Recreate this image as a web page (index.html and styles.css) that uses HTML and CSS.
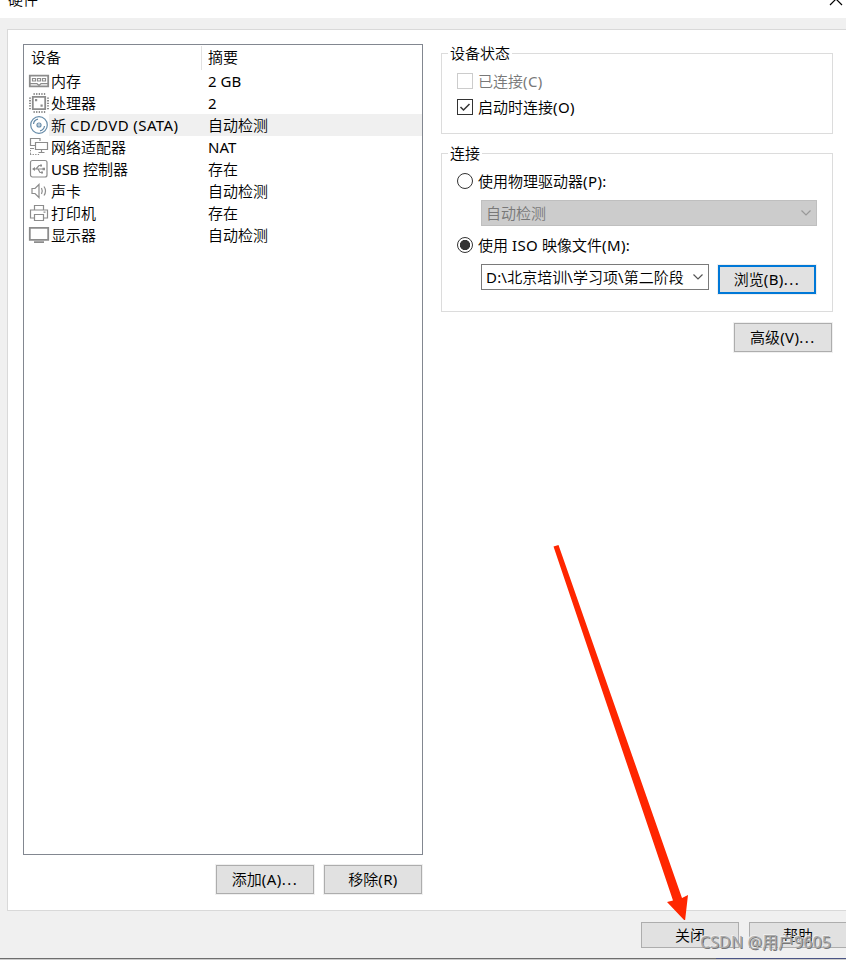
FILE: index.html
```
<!DOCTYPE html>
<html lang="zh-CN">
<head>
<meta charset="utf-8">
<title>硬件</title>
<link rel="stylesheet" href="styles.css">
</head>
<body>
<div class="window">
  <header class="titlebar">
    <span class="title">硬件</span>
    <svg class="close" width="14" height="14" viewBox="0 0 14 14"><path d="M1 1l12 12M13 1L1 13"/></svg>
  </header>
  <main class="panel">
    <section class="left">
      <div class="list">
        <div class="head"><span class="c1">设备</span><span class="c2">摘要</span></div>
        <div class="row">
          <svg class="icon" viewBox="0 0 22 22"><path class="mid" d="M1.800 5.700h18.400v10.600H1.800z"/><path d="M4.500 8.500h3v2.500h-3zM9.500 8.500h3v2.500h-3zM14.500 8.500h3v2.500h-3zM2 13.700h7l2 1.800 2-1.800h7"/></svg>
          <span class="name">内存</span><span class="value"><i>2 GB</i></span>
        </div>
        <div class="row">
          <svg class="icon" viewBox="0 0 22 22"><path class="mid" d="M4.800 4.800h12.400v12.400H4.800z"/><path class="pins" d="M5.500 2h12M5.500 20h12M2 5.500v12M20 5.500v12"/><path class="fill" d="M7 7h2.200v2.200H7zM12.500 12.500h2.200v2.200h-2.200z"/></svg>
          <span class="name">处理器</span><span class="value"><i>2</i></span>
        </div>
        <div class="row selected">
          <svg class="icon disc" viewBox="0 0 22 22"><circle cx="11" cy="11" r="8.300"/><circle cx="11" cy="11" r="2"/><path d="M5.500 10q.5-4 4.500-4.800M16.500 12q-.5 4-4.500 4.800"/><circle class="dot" cx="11" cy="11" r=".8"/></svg>
          <span class="name">新 <i class="lat">CD/DVD (SATA)</i></span><span class="value">自动检测</span>
        </div>
        <div class="row">
          <svg class="icon" viewBox="0 0 22 22"><path d="M7 9.500H2.500v-7H12V5M7.500 6.500h12v7h-12zM13.500 13.500v3M10.500 16.500h6M2 12.500h4"/><path class="pins thin" d="M2.500 14v5M2 18.500h10"/></svg>
          <span class="name">网络适配器</span><span class="value"><i>NAT</i></span>
        </div>
        <div class="row">
          <svg class="icon" viewBox="0 0 22 22"><rect x="2.500" y="2.500" width="16.500" height="16.500" rx="2"/><path d="M5 11h11M8 11l3-3.500h2M10 11l2 3.500h2"/><path class="fill" d="M4 11l3-2v4zM14.500 9.700h2.500v2.500h-2.500zM12 6.500h2v2h-2zM13 13.500h2v2h-2z"/></svg>
          <span class="name"><i class="usb">USB</i> 控制器</span><span class="value">存在</span>
        </div>
        <div class="row">
          <svg class="icon" viewBox="0 0 22 22"><path d="M4 8.500h3l4-4v13l-4-4H4zM13.500 8q1.500 3 0 6M16 6.500q3 4.500 0 9"/></svg>
          <span class="name">声卡</span><span class="value">自动检测</span>
        </div>
        <div class="row">
          <svg class="icon" viewBox="0 0 22 22"><path d="M6.500 8V3.500h9V8M6 16H2.500V8h17v8H16M6.500 12.500h9v6h-9zM15.500 10.200h2"/></svg>
          <span class="name">打印机</span><span class="value">存在</span>
        </div>
        <div class="row">
          <svg class="icon" viewBox="0 0 22 22"><path class="mid" d="M1.800 3.800h18.400v12H1.800zM6 18.200h10"/></svg>
          <span class="name">显示器</span><span class="value">自动检测</span>
        </div>
      </div>
      <div class="actions"><button class="btn">添加<i class="key">(A)</i><i class="dots">...</i></button><button class="btn">移除<i class="key">(R)</i></button></div>
    </section>
    <section class="right">
      <div class="group status">
        <span class="legend">设备状态</span>
        <label class="option disabled"><span class="box"></span><span class="text">已连接<i class="key">(C)</i></span></label>
        <label class="option"><span class="box"><svg width="14" height="14" viewBox="0 0 14 14"><path d="M2.500 7l3 3 6-6"/></svg></span><span class="text">启动时连接<i class="key">(O)</i></span></label>
      </div>
      <div class="group connection">
        <span class="legend">连接</span>
        <label class="option"><span class="radio"></span><span class="text">使用物理驱动器<i class="key">(P):</i></span></label>
        <div class="combo off"><span>自动检测</span><svg width="10" height="6" viewBox="0 0 10 6"><path d="M.5.5L5 5 9.500.5"/></svg></div>
        <label class="option iso"><span class="radio on"></span><span class="text">使用 <i class="key">ISO</i> 映像文件<i class="key">(M):</i></span></label>
        <div class="file">
          <div class="combo"><span><i class="path">D:\</i>北京培训<i class="path">\</i>学习项<i class="path">\</i>第二阶段</span><svg width="10" height="6" viewBox="0 0 10 6"><path d="M.5.5L5 5 9.500.5"/></svg></div>
          <button class="btn primary">浏览<i class="key">(B)</i><i class="dots">...</i></button>
        </div>
      </div>
      <button class="btn advanced">高级<i class="key">(V)</i><i class="dots">...</i></button>
    </section>
  </main>
  <footer class="footer"><button class="btn flat">关闭</button><button class="btn flat">帮助</button></footer>
  <div class="edge"></div>
  <svg class="arrow" width="142" height="380" viewBox="0 0 142 380"><path d="M4.500 6.500L9.500 5l123.500 353 6-3-3 26-18-19 6-1.500z"/></svg>
  <div class="watermark">CSDN @用户9605</div>
</div>
</body>
</html>
```
FILE: styles.css
```
* { box-sizing: border-box; }
body {
  margin: 0;
  font: 350 15px/22px "Noto Sans", "Noto Sans CJK SC", sans-serif;
  color: #000;
}
i { font-style: normal; font-weight: 400; }
.lat { letter-spacing: 0.4px; }
.key { letter-spacing: 0.4px; }
.path { letter-spacing: 0.2px; }
.usb { letter-spacing: -0.3px; }
.dots { letter-spacing: 1.5px; }
.window {
  position: relative;
  width: 846px;
  height: 960px;
  overflow: hidden;
  display: flex;
  flex-direction: column;
  background: #f0f0f0;
  white-space: nowrap;
}
.titlebar {
  height: 18px;
  flex: none;
  background: #fff;
  display: flex;
  justify-content: space-between;
  align-items: flex-start;
  padding: 0 3px 0 8px;
  overflow: hidden;
}
.title { margin-top: -12px; }
.close { margin-top: -8px; fill: none; stroke: #000; stroke-width: 1.2; }
.panel {
  display: flex;
  flex: none;
  gap: 18px;
  height: 882px;
  margin: 11px -10px 0 7px;
  padding: 14px 0 0 15px;
  border: 1px solid #d9d9d9;
  background: #fff;
}
.left { width: 400px; }
.list {
  height: 811px;
  border: 1px solid #828790;
  padding-top: 1px;
}
.head { display: flex; height: 24px; line-height: 23px; }
.c1 { width: 178px; padding-left: 7px; border-right: 1px solid #e2e2e2; }
.c2 { padding-left: 6px; }
.row { display: flex; height: 22px; }
.icon {
  width: 22px;
  height: 22px;
  margin-left: 4px;
  flex: none;
  fill: none;
  stroke: #8c8c8c;
  stroke-width: 1.2;
}
.icon .mid { stroke-width: 1.8; }
.icon .pins { stroke-width: 2; stroke-dasharray: 1.3 1.3; }
.icon .thin { stroke-width: 1; }
.icon .fill { fill: #8c8c8c; stroke: none; }
.disc { stroke: #668ba8; }
.disc .dot { fill: #668ba8; stroke: none; }
.name { width: 154px; padding-left: 1px; }
.value { flex: 1; padding-left: 4px; }
.selected { background: linear-gradient(90deg, transparent 25px, #f0f0f0 25px); }
.actions { display: flex; justify-content: flex-end; gap: 10px; margin: 10px 1px 0 0; }
.btn {
  width: 98px;
  height: 29px;
  flex: none;
  padding: 0 0 2px;
  border: 1px solid #adadad;
  background: #e1e1e1;
  box-shadow: 0 0 0 1px #f0f0f0;
  font: inherit;
  color: #000;
}
.primary { border: 2px solid #0078d7; }
.right { width: 392px; padding-top: 9px; }
.group { border: 1px solid #dcdcdc; padding-left: 15px; }
.legend {
  display: table;
  height: 22px;
  margin: -12px 0 0 -9px;
  padding: 0 2px;
  background: #fff;
}
.status { height: 81px; }
.connection { height: 159px; margin-top: 19px; }
.option { display: flex; align-items: center; gap: 5px; height: 22px; }
.text { padding-bottom: 1px; }
.status .option { margin-bottom: 4px; margin-top: 6px; }
.status .option + .option { margin-top: 0; }
.disabled { color: #787878; }
.box {
  width: 16px;
  height: 16px;
  border: 1px solid #333;
  display: block;
}
.box svg { display: block; fill: none; stroke: #333; stroke-width: 1.5; }
.disabled .box { border-color: #ccc; }
.radio { width: 16px; height: 16px; border: 1px solid #333; border-radius: 50%; }
.radio.on { background: radial-gradient(circle, #333 4.800px, #fff 5.400px); }
.connection .option { margin-top: 6px; }
.combo {
  display: flex;
  justify-content: space-between;
  align-items: center;
  width: 228px;
  height: 26px;
  padding: 0 5px 0 4px;
  border: 1px solid #7a7a7a;
  line-height: 22px;
}
.combo span { padding-bottom: 1px; }
.combo svg { fill: none; stroke: #555; stroke-width: 1.2; flex: none; }
.combo.off {
  width: 336px;
  margin: 8px 0 0 24px;
  color: #787878;
  background: #ccc;
  border-color: #bfbfbf;
}
.off svg { stroke: #999; }
.connection .iso { margin-top: 8px; }
.file { display: flex; gap: 9px; margin: 8px 0 0 24px; }
.file .btn { margin-top: 1px; }
.advanced { display: block; margin: 11px 0 0 293px; }
.footer { display: flex; gap: 10px; margin: 11px -10px 0 641px; }
.flat { height: 26px; padding-bottom: 0; box-shadow: none; }
.edge {
  height: 2px;
  margin-top: auto;
  border-bottom: 1px solid #ccc;
  background: linear-gradient(90deg, #6e6e6e 716px, #4b5585 716px);
}
.arrow { position: absolute; left: 549px; top: 540px; fill: #ff2600; }
.watermark {
  position: absolute;
  left: 700px;
  top: 931px;
  font-size: 16px;
  font-weight: 400;
  letter-spacing: 0.1px;
  color: #aaa;
  text-shadow: 1px 1px 0 #777, -1px -1px 0 #eee;
}
```
